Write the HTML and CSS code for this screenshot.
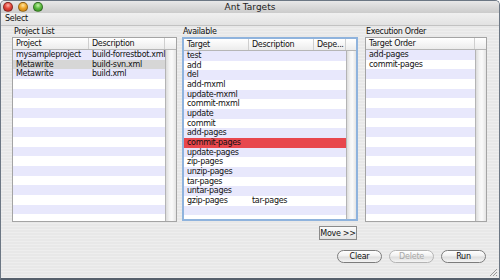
FILE: index.html
```html
<!DOCTYPE html>
<html lang="en">
<head>
    <meta charset="UTF-8">
    <meta name="viewport" content="width=device-width, initial-scale=1.0">
    <title>Ant Targets</title>
    <link rel="stylesheet" href="styles.css">
</head>
<body>

<div class="window">
    <div class="titlebar">
        <div class="lights">
            <span class="light red"></span>
            <span class="light amber"></span>
            <span class="light green"></span>
        </div>
        <div class="title">Ant Targets</div>
    </div>
    <div class="menubar"><span class="menu">Select</span></div>

    <div class="content">
        <div class="panel projects">
            <div class="panel-label">Project List</div>
            <div class="table">
                <div class="thead">
                    <div class="th">Project</div>
                    <div class="th">Description</div>
                    <div class="th"></div>
                </div>
                <div class="tbody">
                    <div class="rows">
                        <div class="tr"><div class="td">mysampleproject</div><div class="td">build-forrestbot.xml</div></div>
                        <div class="tr selected-grey"><div class="td">Metawrite</div><div class="td">build-svn.xml</div></div>
                        <div class="tr"><div class="td">Metawrite</div><div class="td">build.xml</div></div>
                        <div class="tr"></div><div class="tr"></div><div class="tr"></div><div class="tr"></div>
                        <div class="tr"></div><div class="tr"></div><div class="tr"></div><div class="tr"></div>
                        <div class="tr"></div><div class="tr"></div><div class="tr"></div><div class="tr"></div>
                        <div class="tr"></div><div class="tr"></div><div class="tr"></div><div class="tr"></div>
                    </div>
                    <div class="scroll"></div>
                </div>
            </div>
        </div>

        <div class="panel available">
            <div class="panel-label">Available</div>
            <div class="table focused">
                <div class="thead">
                    <div class="th">Target</div>
                    <div class="th">Description</div>
                    <div class="th">Depe...</div>
                    <div class="th"></div>
                </div>
                <div class="tbody">
                    <div class="rows">
                        <div class="tr"><div class="td">test</div></div>
                        <div class="tr"><div class="td">add</div></div>
                        <div class="tr"><div class="td">del</div></div>
                        <div class="tr"><div class="td">add-mxml</div></div>
                        <div class="tr"><div class="td">update-mxml</div></div>
                        <div class="tr"><div class="td">commit-mxml</div></div>
                        <div class="tr"><div class="td">update</div></div>
                        <div class="tr"><div class="td">commit</div></div>
                        <div class="tr"><div class="td">add-pages</div></div>
                        <div class="tr selected-red"><div class="td">commit-pages</div></div>
                        <div class="tr"><div class="td">update-pages</div></div>
                        <div class="tr"><div class="td">zip-pages</div></div>
                        <div class="tr"><div class="td">unzip-pages</div></div>
                        <div class="tr"><div class="td">tar-pages</div></div>
                        <div class="tr"><div class="td">untar-pages</div></div>
                        <div class="tr"><div class="td">gzip-pages</div><div class="td">tar-pages</div></div>
                        <div class="tr"></div><div class="tr"></div><div class="tr"></div>
                    </div>
                    <div class="scroll"></div>
                </div>
            </div>
            <button class="move-btn">Move &gt;&gt;</button>
        </div>

        <div class="panel order">
            <div class="panel-label">Execution Order</div>
            <div class="table">
                <div class="thead">
                    <div class="th">Target Order</div>
                    <div class="th"></div>
                </div>
                <div class="tbody">
                    <div class="rows">
                        <div class="tr"><div class="td">add-pages</div></div>
                        <div class="tr"><div class="td">commit-pages</div></div>
                        <div class="tr"></div><div class="tr"></div><div class="tr"></div><div class="tr"></div>
                        <div class="tr"></div><div class="tr"></div><div class="tr"></div><div class="tr"></div>
                        <div class="tr"></div><div class="tr"></div><div class="tr"></div><div class="tr"></div>
                        <div class="tr"></div><div class="tr"></div><div class="tr"></div><div class="tr"></div>
                        <div class="tr"></div>
                    </div>
                    <div class="scroll"></div>
                </div>
            </div>
        </div>
    </div>

    <div class="actions">
        <button class="pill">Clear</button>
        <button class="pill" disabled>Delete</button>
        <button class="pill">Run</button>
    </div>

    <svg class="grip" width="9" height="9" viewBox="0 0 9 9">
        <path d="M8 1 L1 8 M8 4 L4 8 M8 7 L7 8" stroke="#9a9a9a" stroke-width="1"/>
    </svg>
</div>

</body>
</html>
```

FILE: styles.css
```css
body {
    margin: 0;
    font-family: 'DejaVu Sans', Verdana, sans-serif;
    font-size: 8px;
    letter-spacing: -0.3px;
    color: #111;
    background: #fff;
}
.window {
    position: relative;
    width: 500px;
    height: 280px;
    box-sizing: border-box;
    border: 1px solid #6c7784;
    border-bottom: 2px solid #56606c;
    border-radius: 5px 5px 0 0;
    overflow: hidden;
    background: repeating-linear-gradient(#eeeeee 0 1px, #e8e8e8 1px 3px);
}
.titlebar {
    height: 12px;
    display: flex;
    align-items: center;
    position: relative;
    background: linear-gradient(#e8e8e8, #cbcbcb);
}
.lights {
    display: flex;
    gap: 5px;
    padding-left: 2px;
}
.light {
    width: 10px;
    height: 10px;
    border-radius: 50%;
    box-sizing: border-box;
    border: 1px solid rgba(0, 0, 0, 0.35);
}
.red {
    background: radial-gradient(circle at 50% 30%, #ffb3a8 0, #e2463b 45%, #a8231b 100%);
}
.amber {
    background: radial-gradient(circle at 50% 30%, #ffe7a6 0, #f0a72a 45%, #b8720b 100%);
}
.green {
    background: radial-gradient(circle at 50% 30%, #c7f2a9 0, #5dbc41 45%, #2e7d1c 100%);
}
.title {
    flex: 1;
    text-align: center;
    font-size: 9px;
    letter-spacing: 0;
    color: #222;
    margin-right: 42px;
}
.menubar {
    height: 12px;
    line-height: 12px;
    padding-left: 4px;
    background: linear-gradient(#f0f0f0, #e2e2e2);
    border-bottom: 1px solid #c2c2c2;
}
.content {
    display: flex;
    align-items: flex-start;
    padding-left: 11px;
}
.panel {
    display: flex;
    flex-direction: column;
}
.projects { width: 165px; }
.available { width: 176px; margin-left: 5px; }
.order { width: 122px; margin-left: 7px; }
.panel-label {
    height: 11px;
    line-height: 12px;
    padding-left: 2px;
}
.available .panel-label { padding-left: 1px; }
.order .panel-label { padding-left: 1px; }
.table {
    height: 185px;
    box-sizing: border-box;
    border: 1px solid #a4a4a4;
    background: #fff;
    display: flex;
    flex-direction: column;
}
.table.focused {
    height: 184px;
    border: 2px solid #8fb3dd;
}
.thead {
    display: grid;
    height: 11px;
    line-height: 11px;
    background: linear-gradient(#ffffff, #ececec);
    border-bottom: 1px solid #b6b6b6;
}
.th {
    padding-left: 3px;
    border-right: 1px solid #cfcfcf;
    white-space: nowrap;
    overflow: hidden;
}
.th:last-child { border-right: none; }
.tbody {
    flex: 1;
    display: flex;
    min-height: 0;
}
.rows {
    flex: 1;
    overflow: hidden;
}
.tr {
    display: grid;
    height: 9.67px;
    line-height: 10px;
}
.tr:nth-child(odd) { background: #e8e8fc; }
.tr.selected-grey { background: #d6d6d6; }
.tr.selected-red { background: #e8474d; }
.td {
    padding-left: 3px;
    white-space: nowrap;
    overflow: hidden;
}
.scroll {
    width: 11px;
    border-left: 1px solid #b4b4b4;
    box-sizing: border-box;
    background: linear-gradient(to right, #dcdcdc, #f4f4f4 35%, #fafafa 60%, #e4e4e4);
}
.projects .thead { grid-template-columns: 76px 76px 1fr; }
.projects .tr { grid-template-columns: 76px 76px; }
.available .thead { grid-template-columns: 65px 65px 32px 1fr; }
.available .tr { grid-template-columns: 65px 65px 32px; }
.available .scroll { width: 10px; }
.order .thead { grid-template-columns: 109px 1fr; }
.order .tr { grid-template-columns: 109px; }
.move-btn {
    align-self: flex-end;
    margin-top: 5px;
    margin-right: 1px;
    width: 38px;
    height: 14px;
    padding: 0;
    white-space: nowrap;
    font-family: inherit;
    font-size: 8px;
    letter-spacing: -0.3px;
    color: #111;
    border: 1px solid #8a8a8a;
    background: linear-gradient(#fbfbfb, #e2e2e2);
}
.actions {
    display: flex;
    justify-content: flex-end;
    gap: 7px;
    margin-top: 10px;
    padding-right: 13px;
}
.pill {
    width: 45px;
    height: 13px;
    padding: 0;
    font-family: inherit;
    font-size: 8px;
    letter-spacing: -0.2px;
    color: #111;
    border: 1px solid #7c7c7c;
    border-radius: 7px;
    background: linear-gradient(#ffffff 0, #f0f0f0 45%, #dedede 55%, #f4f4f4 100%);
}
.pill:disabled {
    color: #a8a8a8;
    border-color: #b4b4b4;
}
.grip {
    position: absolute;
    right: 1px;
    bottom: 1px;
}
```
